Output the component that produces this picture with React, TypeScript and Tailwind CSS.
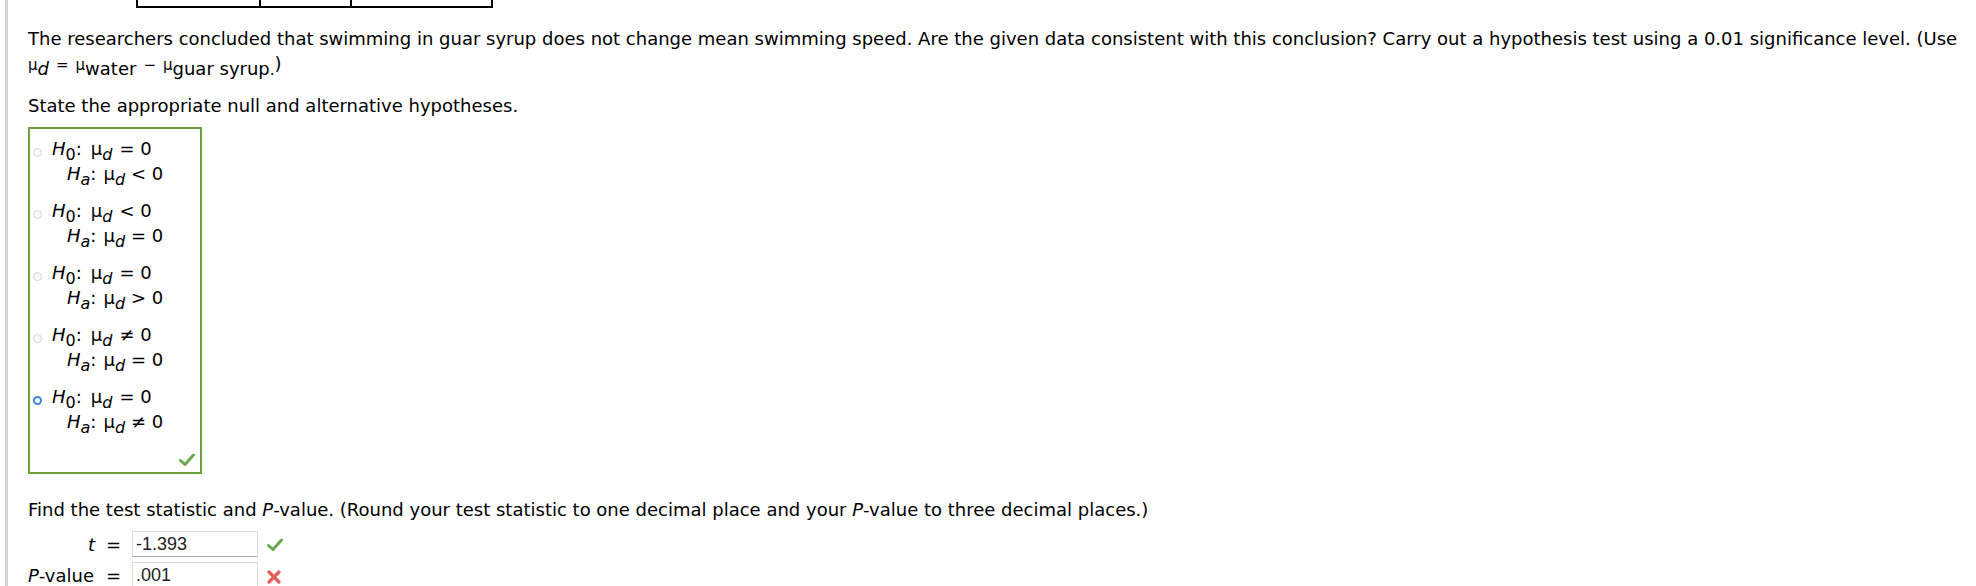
import React from 'react';

const Check: React.FC = () => (
  <svg width="16" height="14" viewBox="0 0 16 14">
    <path d="M1.5 7.5 L6 11.5 L14.5 2" fill="none" stroke="#6aa84f" strokeWidth="3" strokeLinecap="round" strokeLinejoin="round" />
  </svg>
);

const Cross: React.FC = () => (
  <svg width="14" height="14" viewBox="0 0 14 14">
    <path d="M2 2 L12 12 M12 2 L2 12" fill="none" stroke="#e25c5c" strokeWidth="3.2" strokeLinecap="round" />
  </svg>
);

// μ with a lowered subscript
const Mu: React.FC<{ sub: string; italic?: boolean; subSize: string }> = ({ sub, italic, subSize }) => (
  <span>
    μ<span className={`relative top-[5px] ${subSize} ${italic ? 'italic' : ''}`}>{sub}</span>
  </span>
);

// one hypothesis pair, H0 line and Ha line
const Hyp: React.FC<{ h0: string; ha: string; selected?: boolean }> = ({ h0, ha, selected }) => (
  <div className="flex items-start">
    <div className="mt-[12px] ml-[3px] mr-[10px]">
      {selected ? (
        <div className="w-[9px] h-[9px] rounded-full border-[2px] border-[#3d87e0] bg-white" />
      ) : (
        <div className="w-[9px] h-[9px] rounded-full border border-[#d4d4d4] bg-[#fafafa]" />
      )}
    </div>
    <div className="text-[18px]">
      <div className="h-[25px] leading-[25px] whitespace-nowrap">
        <span className="italic">H</span>
        <span className="relative top-[5px] text-[16px]">0</span>:
        <span className="ml-[9px]">
          <Mu sub="d" italic subSize="text-[16px]" />
        </span>
        <span className="ml-[7px]">{h0}</span>
      </div>
      <div className="h-[25px] leading-[25px] whitespace-nowrap pl-[15px]">
        <span className="italic">H</span>
        <span className="relative top-[5px] text-[16px] italic">a</span>:
        <span className="ml-[7px]">
          <Mu sub="d" italic subSize="text-[16px]" />
        </span>
        <span className="ml-[6px]">{ha}</span>
      </div>
    </div>
  </div>
);

const options = [
  { h0: '= 0', ha: '< 0' },
  { h0: '< 0', ha: '= 0' },
  { h0: '= 0', ha: '> 0' },
  { h0: '≠ 0', ha: '= 0' },
  { h0: '= 0', ha: '≠ 0', selected: true },
];

export default function App() {
  return (
    <div className="h-[586px] overflow-hidden bg-white text-black text-[18px] font-['DejaVu_Sans','Verdana',sans-serif]">
      <div className="flex h-full">
        <div className="w-[5px]" />
        <div className="w-[3px] bg-[#d2d2d2]" />
        <div className="pl-[20px] flex-1">
          {/* bottom of the data table above */}
          <div className="ml-[108px] flex h-[8px] w-[357px] border-x-2 border-b-2 border-black">
            <div className="w-[123px] border-r-2 border-black" />
            <div className="w-[91px] border-r-2 border-black" />
            <div className="flex-1" />
          </div>

          <div className="mt-[21px] h-[20px] leading-[20px] whitespace-nowrap">
            The researchers concluded that swimming in guar syrup does not change mean swimming speed. Are the given data consistent with this conclusion? Carry out a hypothesis test using a 0.01 significance level. (Use
          </div>
          <div className="mt-[5px] h-[20px] leading-[20px] whitespace-nowrap text-[15px]">
            <Mu sub="d" italic subSize="text-[18px]" />
            <span className="mx-[7px]">=</span>
            <Mu sub="water" subSize="text-[18px]" />
            <span className="mx-[7px]">−</span>
            <Mu sub="guar syrup" subSize="text-[18px]" />
            <span className="relative top-[5px]">.</span>
            <span className="text-[18px]">)</span>
          </div>

          <div className="mt-[22px] h-[20px] leading-[20px]">State the appropriate null and alternative hypotheses.</div>

          <div className="mt-[11px] w-[174px] border-2 border-[#6b9f40] pt-[7px] pb-[5px] pr-[5px]">
            <div className="flex flex-col gap-[12px]">
              {options.map((o, i) => (
                <Hyp key={i} h0={o.h0} ha={o.ha} selected={o.selected} />
              ))}
            </div>
            <div className="mt-[19px] flex justify-end">
              <Check />
            </div>
          </div>

          <div className="mt-[26px] h-[20px] leading-[20px] whitespace-nowrap">
            Find the test statistic and <span className="italic">P</span>-value. (Round your test statistic to one decimal place and your <span className="italic">P</span>-value to three decimal places.)
          </div>

          <div className="mt-[11px] flex items-center h-[26px]">
            <div className="w-[67px] text-right italic">t</div>
            <div className="w-[37px] text-center">=</div>
            <div className="w-[126px] h-[26px] border border-[#dcdcdc] border-b-[#b0b0b0] pl-[3px] leading-[24px] text-[18px] text-[#222] font-['Liberation_Sans',Arial,sans-serif]">
              -1.393
            </div>
            <div className="ml-[9px] mt-[2px]">
              <Check />
            </div>
          </div>

          <div className="mt-[5px] flex items-center h-[26px]">
            <div className="w-[67px] whitespace-nowrap">
              <span className="italic">P</span>-value
            </div>
            <div className="w-[37px] text-center">=</div>
            <div className="w-[126px] h-[26px] border border-[#dcdcdc] border-b-[#b0b0b0] pl-[3px] leading-[24px] text-[18px] text-[#222] font-['Liberation_Sans',Arial,sans-serif]">
              .001
            </div>
            <div className="ml-[9px] mt-[4px]">
              <Cross />
            </div>
          </div>
        </div>
      </div>
    </div>
  );
}
